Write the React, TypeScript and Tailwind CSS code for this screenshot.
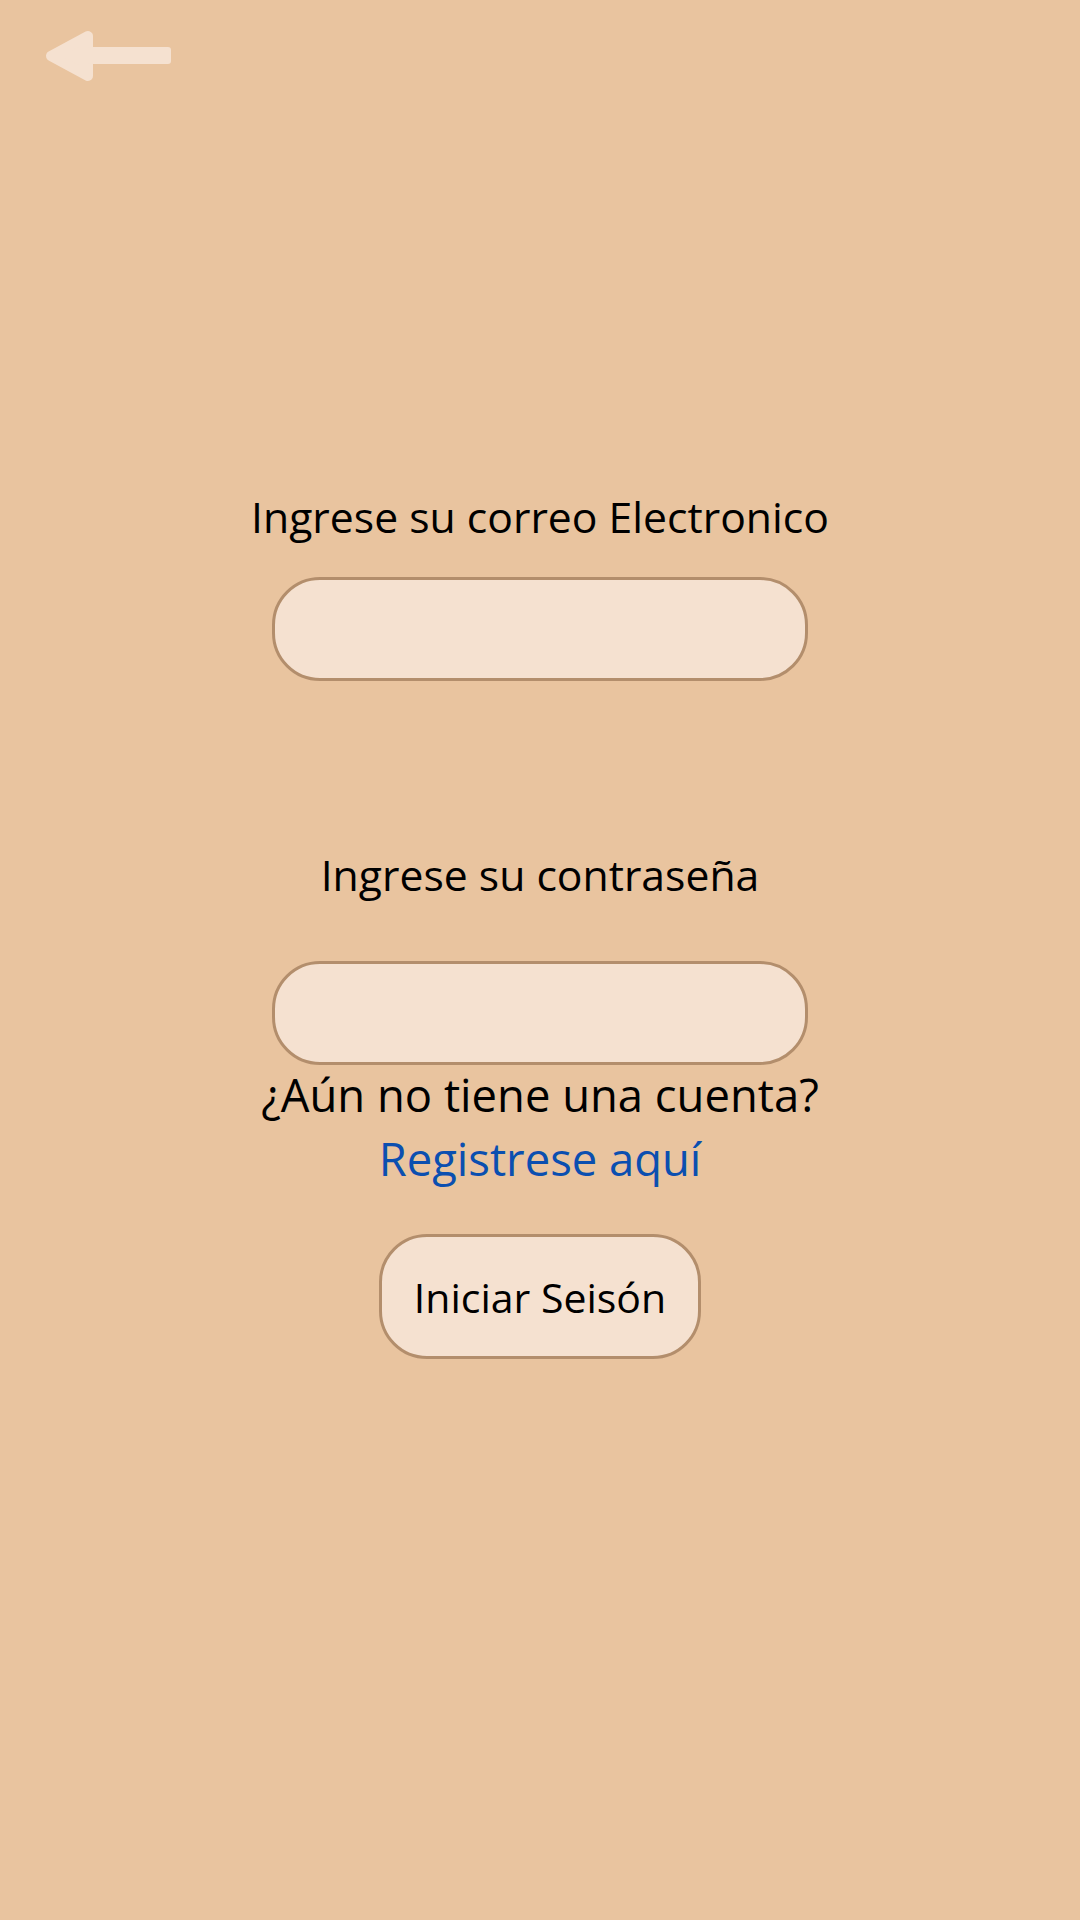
import React, { useState } from 'react'

const BackArrow: React.FC = () => (
    <svg width="130" height="56" viewBox="0 0 130 56" fill="none">
        <polygon points="7,28 44,8 44,48" fill="#f5e1d0" stroke="#f5e1d0" strokeWidth="10" strokeLinejoin="round" />
        <rect x="44" y="19" width="83" height="17" rx="3" fill="#f5e1d0" />
    </svg>
)

const App: React.FC = () => {
    const [email, setEmail] = useState<string>("")
    const [password, setPassword] = useState<string>("")

    return (
        <div className="min-h-screen w-full bg-[#e9c49f] font-['Open_Sans','Noto_Sans',sans-serif] text-black">
            <div className="h-[84px] pl-[44px] pt-[28px]">
                <button type="button" aria-label="Volver">
                    <BackArrow />
                </button>
            </div>

            <form className="flex flex-col items-center pt-[404px]" onSubmit={(e) => e.preventDefault()}>
                <label htmlFor="email" className="text-[42.7px] leading-[57px]">
                    Ingrese su correo Electronico
                </label>
                <input
                    id="email"
                    type="email"
                    value={email}
                    onChange={(e) => setEmail(e.target.value)}
                    className="mt-[32px] h-[104px] w-[536px] rounded-[48px] border-[3px] border-[#b38e6c] bg-[#f5e1d0] px-8 text-[36px] outline-none"
                />

                <label htmlFor="password" className="mt-[165px] text-[42.7px] leading-[57px]">
                    Ingrese su contraseña
                </label>
                <input
                    id="password"
                    type="password"
                    value={password}
                    onChange={(e) => setPassword(e.target.value)}
                    className="mt-[58px] h-[104px] w-[536px] rounded-[48px] border-[3px] border-[#b38e6c] bg-[#f5e1d0] px-8 text-[36px] outline-none"
                />

                <p className="text-[45.4px] leading-[58px]">¿Aún no tiene una cuenta?</p>
                <a href="#" className="mt-[6px] text-[45.4px] leading-[58px] text-[#0b4fb0]">
                    Registrese aquí
                </a>

                <button
                    type="submit"
                    className="mt-[47px] h-[125px] w-[322px] rounded-[48px] border-[3px] border-[#b38e6c] bg-[#f5e1d0] text-[41px] leading-[normal]"
                >
                    Iniciar Seisón
                </button>
            </form>
        </div>
    )
}

export default App
